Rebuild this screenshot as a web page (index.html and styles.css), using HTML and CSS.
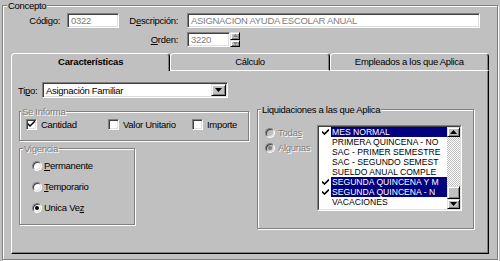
FILE: index.html
```html
<!DOCTYPE html>
<html lang="es">
<head>
<meta charset="utf-8">
<title>Concepto</title>
<link rel="stylesheet" href="styles.css">
</head>
<body>
<fieldset class="group concepto">
  <legend class="legend">Concepto</legend>
  <div class="header-grid">
    <label class="lbl lbl-a">Código:</label>
    <div class="field dis">0322</div>
    <label class="lbl lbl-b">D<u>e</u>scripción:</label>
    <div class="field dis">ASIGNACION AYUDA ESCOLAR ANUAL</div>
    <span></span><span></span>
    <label class="lbl lbl-b"><u>O</u>rden:</label>
    <div class="spin-wrap">
      <div class="field dis spin-field">3220</div>
      <div class="spin">
        <span class="btn spin-btn"><svg width="5" height="3" viewBox="0 0 5 3"><path d="M2.5 0 L5 3 L0 3 Z" fill="#808080"/></svg></span>
        <span class="btn spin-btn"><svg width="5" height="3" viewBox="0 0 5 3"><path d="M0 0 L5 0 L2.5 3 Z" fill="#808080"/></svg></span>
      </div>
    </div>
  </div>

  <div class="tabs">
    <div class="tab active">Características</div>
    <div class="tab">Cálculo</div>
    <div class="tab">Empleados a los que Aplica</div>
  </div>

  <div class="panel">
    <div class="left-col">
      <div class="tipo-row">
        <label class="tipo-lbl">Ti<u>p</u>o:</label>
        <div class="combo">
          <span class="combo-text">Asignación Familiar</span>
          <span class="btn combo-btn"><svg width="7" height="4" viewBox="0 0 7 4"><path d="M0 0 L7 0 L3.5 4 Z" fill="#000"/></svg></span>
        </div>
      </div>

      <fieldset class="group se-informa">
        <legend class="legend legend-s dis-lbl">Se Informa</legend>
        <div class="checks">
          <div class="chk-item w1"><span class="chk"><svg width="7" height="7" viewBox="0 0 7 7"><path d="M0 2 L2 4 L7 -1 L7 1 L2 6 L0 4 Z" fill="#000"/></svg></span>Cantidad</div>
          <div class="chk-item w2"><span class="chk"></span>Valor Unitario</div>
          <div class="chk-item"><span class="chk"></span>Importe</div>
        </div>
      </fieldset>

      <fieldset class="group vigencia">
        <legend class="legend dis-lbl">Vigencia</legend>
        <div class="vig-body">
          <div class="radio-row"><span class="radio"></span><span><u>P</u>ermanente</span></div>
          <div class="radio-row"><span class="radio"></span><span><u>T</u>emporario</span></div>
          <div class="radio-row"><span class="radio"><span class="dot"></span></span><span>Unica Ve<u>z</u></span></div>
        </div>
      </fieldset>
    </div>

    <fieldset class="group liquid">
      <legend class="legend">Liquidaciones a las que Aplica</legend>
      <div class="liq-body">
        <div class="liq-radios">
          <div class="radio-row small dis-lbl"><span class="radio disabled"></span><span>Toda<u>s</u></span></div>
          <div class="radio-row small dis-lbl"><span class="radio disabled"><span class="dot"></span></span><span>Algunas</span></div>
        </div>
        <div class="listbox">
          <div class="listbox-in">
            <div class="items">
              <div class="item sel"><span class="ck"><svg width="7" height="6" viewBox="0 0 7 6"><path d="M0 2.5 L2.5 5 L7 0.5" stroke="#000" stroke-width="1.6" fill="none"/></svg></span><span class="txt">MES NORMAL</span></div>
              <div class="item"><span class="ck"></span><span class="txt">PRIMERA QUINCENA - NO</span></div>
              <div class="item"><span class="ck"></span><span class="txt">SAC - PRIMER SEMESTRE</span></div>
              <div class="item"><span class="ck"></span><span class="txt">SAC - SEGUNDO SEMEST</span></div>
              <div class="item"><span class="ck"></span><span class="txt">SUELDO ANUAL COMPLE</span></div>
              <div class="item sel"><span class="ck"><svg width="7" height="6" viewBox="0 0 7 6"><path d="M0 2.5 L2.5 5 L7 0.5" stroke="#000" stroke-width="1.6" fill="none"/></svg></span><span class="txt">SEGUNDA QUINCENA Y M</span></div>
              <div class="item sel"><span class="ck"><svg width="7" height="6" viewBox="0 0 7 6"><path d="M0 2.5 L2.5 5 L7 0.5" stroke="#000" stroke-width="1.6" fill="none"/></svg></span><span class="txt">SEGUNDA QUINCENA - N</span></div>
              <div class="item"><span class="ck"></span><span class="txt">VACACIONES</span></div>
            </div>
            <div class="vscroll">
              <span class="btn sb-btn"><svg width="7" height="4" viewBox="0 0 7 4"><path d="M3.5 0 L7 4 L0 4 Z" fill="#000"/></svg></span>
              <div class="track"><span class="btn thumb"></span></div>
              <span class="btn sb-btn"><svg width="7" height="4" viewBox="0 0 7 4"><path d="M0 0 L7 0 L3.5 4 Z" fill="#000"/></svg></span>
            </div>
          </div>
        </div>
      </div>
    </fieldset>
  </div>
</fieldset>
</body>
</html>
```

FILE: styles.css
```css
* { box-sizing: border-box; }
html, body { margin: 0; padding: 0; }
body {
  width: 500px;
  height: 261px;
  overflow: hidden;
  background: #c0c0c0;
  color: #000;
  font-family: "Liberation Sans", Arial, sans-serif;
  font-size: 9.5px;
  letter-spacing: -0.3px;
}

/* etched group box */
.group {
  margin: 0;
  padding: 0;
  min-width: 0;
  border: 1px solid #808080;
  box-shadow: inset 1px 1px 0 #fff, 1px 1px 0 #fff;
}
.legend {
  margin-left: 3px;
  padding: 0 1px;
  height: 11px;
  line-height: 11px;
  background: #c0c0c0;
}
.legend-s { margin-left: 1px; }
.dis-lbl { color: #808080; text-shadow: 1px 1px 0 #fff; }

.concepto {
  margin-left: 2px;
  width: 496px;
  height: 260px;
}
.concepto > .legend { margin-left: 4px; }

/* header fields */
.header-grid {
  display: grid;
  grid-template-columns: 64px 52px 68px 293px;
  grid-template-rows: 15px 15px;
  row-gap: 4px;
  margin-top: 2px;
}
.lbl { text-align: right; line-height: 15px; white-space: nowrap; }
.lbl-a { padding-right: 7px; }
.lbl-b { padding-right: 9px; }

.field {
  height: 15px;
  background: #fff;
  border: 1px solid;
  border-color: #808080 #fff #fff #808080;
  box-shadow: inset 1px 1px 0 #404040, inset -1px -1px 0 #dfdfdf;
  padding: 0 2px 0 3px;
  line-height: 13px;
  white-space: nowrap;
  overflow: hidden;
}
.dis { color: #808080; }

.spin-wrap { display: flex; width: 53px; height: 15px; }
.spin-field { flex: 1; }
.spin { display: flex; flex-direction: column; width: 10px; }

.btn {
  display: flex;
  align-items: center;
  justify-content: center;
  background: #c0c0c0;
  border: 1px solid;
  border-color: #dfdfdf #000 #000 #dfdfdf;
  box-shadow: inset 1px 1px 0 #fff, inset -1px -1px 0 #808080;
}
.spin-btn { flex: 1; }

/* tabs */
.tabs {
  display: grid;
  grid-template-columns: repeat(3, 1fr);
  width: 478px;
  height: 18px;
  margin: 6px 0 0 8px;
}
.tab {
  height: 18px;
  border: 1px solid;
  border-color: #fff #000 #fff #fff;
  border-radius: 4px 4px 0 0;
  box-shadow: inset -1px 0 0 #808080;
  text-align: center;
  line-height: 15px;
  white-space: nowrap;
}
.tab.active { border-bottom: none; font-weight: bold; letter-spacing: -0.2px; }

/* panel */
.panel {
  width: 478px;
  height: 183px;
  margin-left: 8px;
  border-left: 1px solid #fff;
  border-right: 1px solid #000;
  border-bottom: 1px solid #000;
  box-shadow: inset -1px -1px 0 #808080;
  padding: 11px 0 0 6px;
  display: grid;
  grid-template-columns: 231px 217px;
  column-gap: 8px;
  align-items: start;
}

.left-col { display: flex; flex-direction: column; }

.tipo-row { display: flex; align-items: center; height: 16px; }
.tipo-lbl { width: 24px; }
.combo {
  width: 186px;
  height: 16px;
  display: flex;
  align-items: center;
  background: #fff;
  border: 1px solid;
  border-color: #808080 #fff #fff #808080;
  box-shadow: inset 1px 1px 0 #404040, inset -1px -1px 0 #dfdfdf;
  padding: 1px;
}
.combo-text { flex: 1; padding-left: 2px; white-space: nowrap; }
.combo-btn { width: 15px; height: 12px; }

.se-informa {
  margin: 8px 0 0 1px;
  width: 230px;
  height: 35px;
}
.checks { display: flex; align-items: center; height: 12px; margin: 1px 0 0 6px; }
.chk-item { display: flex; align-items: center; gap: 4px; white-space: nowrap; }
.chk-item.w1 { width: 82px; }
.chk-item.w2 { width: 84px; }
.chk {
  width: 11px;
  height: 11px;
  display: flex;
  align-items: center;
  justify-content: center;
  background: #fff;
  border: 1px solid;
  border-color: #808080 #fff #fff #808080;
  box-shadow: inset 1px 1px 0 #404040, inset -1px -1px 0 #dfdfdf;
}

.vigencia {
  margin: 2px 0 0 1px;
  width: 116px;
  height: 82px;
}
.vig-body { padding: 1px 0 0 12px; }
.radio-row { display: flex; align-items: center; gap: 2px; height: 21px; white-space: nowrap; }
.radio-row.small { height: 15px; gap: 3px; }
.radio {
  width: 10px;
  height: 10px;
  border-radius: 50%;
  display: flex;
  align-items: center;
  justify-content: center;
  background: #fff;
  border: 1px solid;
  border-color: #808080 #fff #fff #808080;
  box-shadow: inset 1px 1px 0 #404040, inset -1px -1px 0 #dfdfdf;
}
.radio .dot { width: 4px; height: 4px; border-radius: 50%; background: #000; }
.radio.disabled { background: #c0c0c0; }
.radio.disabled .dot { background: #808080; }

/* liquidaciones */
.liquid {
  margin-top: 22px;
  width: 217px;
  height: 125px;
}
.liq-body { display: flex; padding: 10px 0 0 7px; }
.liq-radios { width: 52px; }

.listbox {
  width: 145px;
  height: 86px;
  border: 1px solid;
  border-color: #808080 #fff #fff #808080;
}
.listbox-in {
  height: 100%;
  display: flex;
  background: #fff;
  border: 1px solid;
  border-color: #404040 #dfdfdf #dfdfdf #404040;
}
.items {
  flex: 1;
  min-width: 0;
  font-size: 8.6px;
  letter-spacing: 0;
}
.item { display: flex; height: 10px; line-height: 10px; }
.ck { width: 12px; flex: none; display: flex; align-items: center; justify-content: center; }
.txt { flex: 1; min-width: 0; padding-left: 1px; white-space: nowrap; overflow: hidden; }
.item.sel .txt { background: #000080; color: #fff; }

.vscroll { width: 13px; flex: none; display: flex; flex-direction: column; }
.sb-btn { height: 10px; }
.track {
  flex: 1;
  display: flex;
  flex-direction: column;
  justify-content: flex-end;
  background: repeating-conic-gradient(#fff 0 25%, #c0c0c0 0 50%) 0 0 / 2px 2px;
}
.thumb { height: 13px; }
```
